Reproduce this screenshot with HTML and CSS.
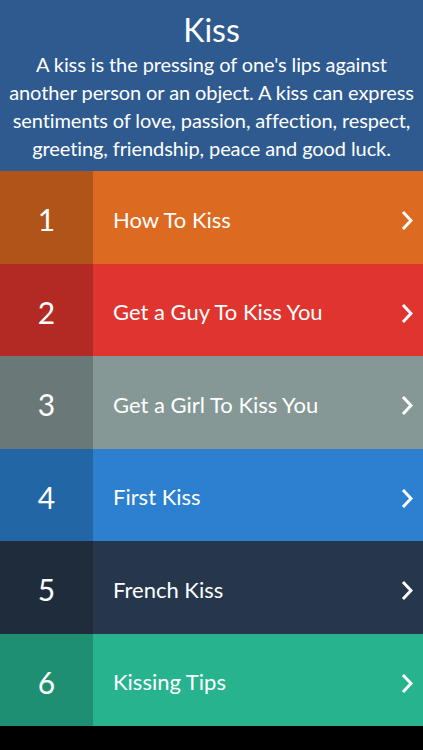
FILE: index.html
```html
<!DOCTYPE html>
<html lang="en">
<head>
  <meta charset="UTF-8" />
  <meta name="viewport" content="width=device-width, initial-scale=1.0"/>
  <title>Kiss</title>
  <link rel="stylesheet" href="styles.css">
</head>
<body>
  <div class="header">
    <h1>Kiss</h1>
    <p>A kiss is the pressing of one's lips against<br>another person or an object. A kiss can express<br>sentiments of love, passion, affection, respect,<br>greeting, friendship, peace and good luck.</p>
  </div>

  <ul class="topics">
    <li class="topic orange">
      <span class="num">1</span>
      <span class="name">How To Kiss</span>
      <svg class="chev" width="12" height="21" viewBox="0 0 12 21"><polyline points="2,2 10,10.5 2,19" /></svg>
    </li>
    <li class="topic red">
      <span class="num">2</span>
      <span class="name">Get a Guy To Kiss You</span>
      <svg class="chev" width="12" height="21" viewBox="0 0 12 21"><polyline points="2,2 10,10.5 2,19" /></svg>
    </li>
    <li class="topic gray">
      <span class="num">3</span>
      <span class="name">Get a Girl To Kiss You</span>
      <svg class="chev" width="12" height="21" viewBox="0 0 12 21"><polyline points="2,2 10,10.5 2,19" /></svg>
    </li>
    <li class="topic blue">
      <span class="num">4</span>
      <span class="name">First Kiss</span>
      <svg class="chev" width="12" height="21" viewBox="0 0 12 21"><polyline points="2,2 10,10.5 2,19" /></svg>
    </li>
    <li class="topic navy">
      <span class="num">5</span>
      <span class="name">French Kiss</span>
      <svg class="chev" width="12" height="21" viewBox="0 0 12 21"><polyline points="2,2 10,10.5 2,19" /></svg>
    </li>
    <li class="topic teal">
      <span class="num">6</span>
      <span class="name">Kissing Tips</span>
      <svg class="chev" width="12" height="21" viewBox="0 0 12 21"><polyline points="2,2 10,10.5 2,19" /></svg>
    </li>
  </ul>
</body>
</html>
```

FILE: styles.css
```css
body {
  margin: 0;
  background: #000;
  color: #fff;
  font-family: Lato, sans-serif;
}
.header {
  background: #2e5a8f;
  height: 171px;
  box-sizing: border-box;
  padding-top: 12px;
  text-align: center;
}
.header h1 {
  margin: 0;
  font-size: 32px;
  font-weight: normal;
  line-height: 36px;
}
.header p {
  margin: 2px 0 0;
  font-size: 20px;
  line-height: 28px;
  letter-spacing: -0.1px;
  white-space: nowrap;
}
.topics {
  list-style: none;
  margin: 0;
  padding: 0;
}
.topic {
  display: flex;
  align-items: center;
  height: 92.5px;
}
.num {
  width: 93px;
  height: 100%;
  display: flex;
  align-items: center;
  justify-content: center;
  padding-top: 4px;
  box-sizing: border-box;
  background: rgba(0, 0, 0, 0.2);
  font-size: 30px;
}
.name {
  flex: 1;
  padding-left: 20px;
  padding-top: 4px;
  font-size: 22px;
}
.chev {
  margin-right: 10px;
  margin-top: 7px;
  fill: none;
  stroke: #fff;
  stroke-width: 3;
}
.orange { background: #dc6a20; }
.red { background: #e0352f; }
.gray { background: #859895; }
.blue { background: #2c80cf; }
.navy { background: #26374b; }
.teal { background: #27b38e; }
```
